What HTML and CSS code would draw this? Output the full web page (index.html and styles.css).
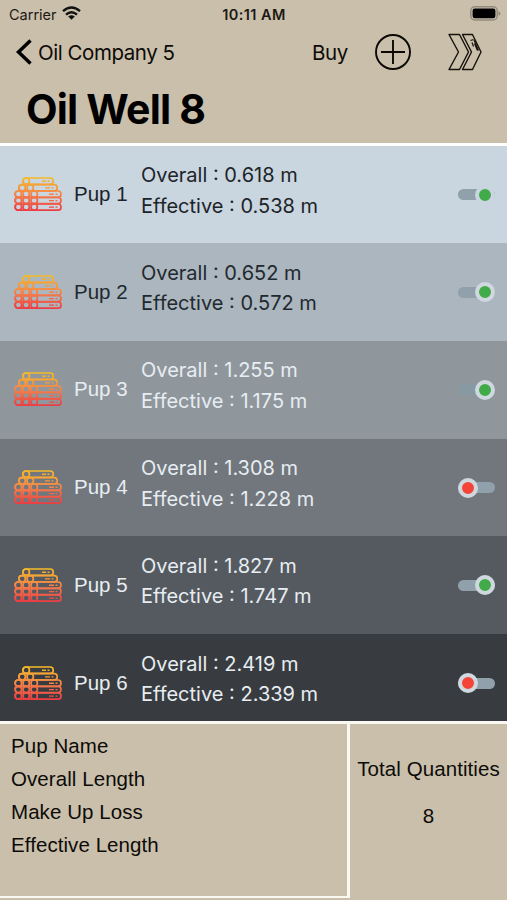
FILE: index.html
```html
<!DOCTYPE html>
<html lang="en">
<head>
<meta charset="utf-8">
<title>Oil Well 8</title>
<link rel="stylesheet" href="styles.css">
</head>
<body>
<svg width="0" height="0" class="defs" aria-hidden="true">
  <defs>
    <linearGradient id="heat" gradientUnits="userSpaceOnUse" x1="0" y1="0" x2="0" y2="34">
      <stop offset="0" stop-color="#f5bd25"/><stop offset=".5" stop-color="#f4844a"/><stop offset="1" stop-color="#ec3b43"/>
    </linearGradient>
    <symbol id="pipes" viewBox="0 0 48 35">
      <g fill="none" stroke="url(#heat)" stroke-width="1.7">
        <rect x="8.8" y="1" width="30.4" height="6.4" rx="3"/>
        <rect x="4.8" y="7.6" width="38.4" height="6.3" rx="3"/>
        <rect x="1" y="14" width="46" height="6.3" rx="3"/>
        <rect x="1" y="20.4" width="46" height="6.2" rx="3"/>
        <rect x="1" y="26.8" width="46" height="6.4" rx="3"/>
        <circle cx="12.2" cy="4.2" r="3.2"/>
        <circle cx="8.2" cy="10.8" r="3.2"/><circle cx="16.2" cy="10.8" r="3.2"/>
        <circle cx="4.4" cy="17.2" r="3.2"/><circle cx="12.2" cy="17.2" r="3.2"/><circle cx="20.2" cy="17.2" r="3.2"/>
        <circle cx="4.4" cy="23.5" r="3.2"/><circle cx="12.2" cy="23.5" r="3.2"/><circle cx="20.2" cy="23.5" r="3.2"/>
        <circle cx="4.4" cy="30" r="3.2"/><circle cx="12.2" cy="30" r="3.2"/><circle cx="20.2" cy="30" r="3.2"/>
        <path stroke-width="1.4" d="M28 4.3h4M33.500 4.3h2M31 10.9h5M37.500 10.9h2M35 17.3h5M41.500 17.3h2M35 23.600h5M41.500 23.600h2M35 30.100h5M41.500 30.100h2"/>
      </g>
    </symbol>
  </defs>
</svg>
<div class="app">
  <header class="header">
    <div class="status">
      <div class="carrier"><span>Carrier</span>
        <svg width="19" height="14" viewBox="0 0 19 14"><g fill="none" stroke="#111" stroke-width="2.4"><path d="M1 5.200Q9.500-2.200 18 5.200"/><path d="M4 8.600Q9.500 3.800 15 8.600"/></g><path d="M6.200 10.600Q9.500 7.800 12.800 10.600L9.500 13.800Z" fill="#111"/></svg>
      </div>
      <div class="time">10:11 AM</div>
      <svg class="battery" width="31" height="15" viewBox="0 0 31 15"><rect x=".8" y=".8" width="26.400" height="13.200" rx="4" fill="none" stroke="#918a7c" stroke-width="1.500"/><rect x="2.600" y="2.600" width="22.800" height="9.600" rx="2.200" fill="#000"/><path d="M28.500 5q2 .8 2 2.400t-2 2.400z" fill="#918a7c"/></svg>
    </div>
    <nav class="nav">
      <svg class="back-icon" width="18" height="28" viewBox="0 0 18 28"><path d="M15.500 2.500 3.500 14 15.500 25.500" fill="none" stroke="#000" stroke-width="3.500"/></svg>
      <span class="back">Oil Company 5</span>
      <span class="buy">Buy</span>
      <svg class="add" width="38" height="38" viewBox="0 0 38 38"><g fill="none" stroke="#0b0906" stroke-width="1.900"><circle cx="19" cy="19" r="17"/><path d="M19 7v24M7 19h24"/></g></svg>
      <svg class="next" width="36" height="38" viewBox="0 0 36 38"><g fill="none" stroke="#15110c" stroke-width="1.400" stroke-linejoin="round"><path d="M2 1.500H12.500L21.500 19 12.500 36.500H2L11.500 19Z"/><path d="M15.500 1.500H25.500L34 19 25.500 36.500H15.500L24.500 19Z"/><path d="M23.500 7.500l3-1M25 9.500l1.500 4M27 7l4.500 10.500M27.500 10.500l3 7" stroke-width="1.200"/></g></svg>
    </nav>
    <h1 class="title">Oil Well 8</h1>
  </header>
  <main class="list">
    <section class="row r1"><svg class="pipes"><use href="#pipes"/></svg><div class="name">Pup 1</div><div class="data"><div>Overall : 0.618 m</div><div>Effective : 0.538 m</div></div><div class="toggle on"><i></i></div></section>
    <section class="row r2"><svg class="pipes"><use href="#pipes"/></svg><div class="name">Pup 2</div><div class="data"><div>Overall : 0.652 m</div><div>Effective : 0.572 m</div></div><div class="toggle on"><i></i></div></section>
    <section class="row r3"><svg class="pipes"><use href="#pipes"/></svg><div class="name">Pup 3</div><div class="data"><div>Overall : 1.255 m</div><div>Effective : 1.175 m</div></div><div class="toggle on"><i></i></div></section>
    <section class="row r4"><svg class="pipes"><use href="#pipes"/></svg><div class="name">Pup 4</div><div class="data"><div>Overall : 1.308 m</div><div>Effective : 1.228 m</div></div><div class="toggle off"><i></i></div></section>
    <section class="row r5"><svg class="pipes"><use href="#pipes"/></svg><div class="name">Pup 5</div><div class="data"><div>Overall : 1.827 m</div><div>Effective : 1.747 m</div></div><div class="toggle on"><i></i></div></section>
    <section class="row r6"><svg class="pipes"><use href="#pipes"/></svg><div class="name">Pup 6</div><div class="data"><div>Overall : 2.419 m</div><div>Effective : 2.339 m</div></div><div class="toggle off"><i></i></div></section>
  </main>
  <footer class="footer">
    <div class="details"><div>Pup Name</div><div>Overall Length</div><div>Make Up Loss</div><div>Effective Length</div></div>
    <div class="total"><div>Total Quantities</div><div class="count">8</div></div>
  </footer>
</div>
</body>
</html>
```
FILE: styles.css
```css
* { box-sizing: border-box; }
body { margin: 0; background: #cabfab; }
.defs { position: absolute; }
svg { display: block; flex: none; }
.app { width: 507px; height: 900px; display: flex; flex-direction: column; overflow: hidden; font-family: Inter, "Liberation Sans", sans-serif; color: #0d0b08; white-space: nowrap; }
.header { height: 146px; flex: none; border-bottom: 3px solid #fff; background: #cabfab; }
.status { height: 28px; display: grid; grid-template-columns: 1fr auto 1fr; align-items: center; padding: 0 6px 0 9px; font-size: 14.5px; color: #1c1914; }
.carrier { display: flex; align-items: center; gap: 5px; }
.carrier svg { margin-top: -3px; }
.time { font-weight: 600; font-size: 14.5px; letter-spacing: .4px; margin-right: 2px; }
.battery { justify-self: end; margin-top: -1px; }
.nav { height: 48px; display: flex; align-items: center; padding-left: 15px; font-size: 20.5px; }
.back { width: 137px; margin-left: 5px; letter-spacing: -.45px; }
.buy { width: 36px; margin-left: 137px; letter-spacing: -.4px; }
.add { margin-left: 26px; }
.next { margin-left: 35px; }
.title { margin: 4px 0 0 26px; font-size: 41px; line-height: 58px; font-weight: 700; letter-spacing: -.8px; color: #000; }
.list { height: 575px; flex: none; overflow: hidden; }
.row { height: 97.75px; display: flex; padding: .6px 0 0 14px; }
.row:first-child { height: 97px; padding-top: 0; }
.pipes { width: 48px; height: 35px; margin-top: 31px; }
.name { width: 79px; flex: none; padding-left: 12px; margin-top: 33px; font: 20.5px/30px "Liberation Sans", sans-serif; }
.data { font-size: 20px; line-height: 30.5px; margin-top: 14px; width: 317px; flex: none; }
.toggle { width: 37px; height: 21px; flex: none; margin-top: 38px; display: flex; align-items: center; }
.toggle::before { content: ""; width: 37px; height: 11px; flex: none; border-radius: 5.5px; background: #90a1ac; }
.toggle i { width: 20px; height: 20px; flex: none; border-radius: 50%; border: 4.5px solid #d0d8df; background: #42ab49; margin-left: -20px; }
.toggle.off i { background: #f44438; margin-left: -37px; }
.r1 { background: #c9d5df; color: #1d2429; }
.r1 .toggle i { border-color: #c9d5df; }
.r2 { background: #abb6bf; color: #22292e; }
.r3 { background: #8f979d; color: #e7edf2; }
.r3 .toggle::before { background: #8799a2; }
.r4 { background: #71777d; color: #e7edf2; }
.r5 { background: #545a60; color: #e7edf2; }
.r6 { background: #383c40; color: #e7edf2; }
.footer { flex: 1; display: flex; border-top: 3px solid #faf8f3; font: 20.5px/33px "Liberation Sans", sans-serif; letter-spacing: .07px; }
.details { width: 350px; height: 174px; padding: 5px 0 0 11px; border-right: 3px solid #faf8f3; border-bottom: 2px solid #faf8f3; }
.total { flex: 1; text-align: center; padding-top: 28px; }
.count { margin-top: 14px; }
```
